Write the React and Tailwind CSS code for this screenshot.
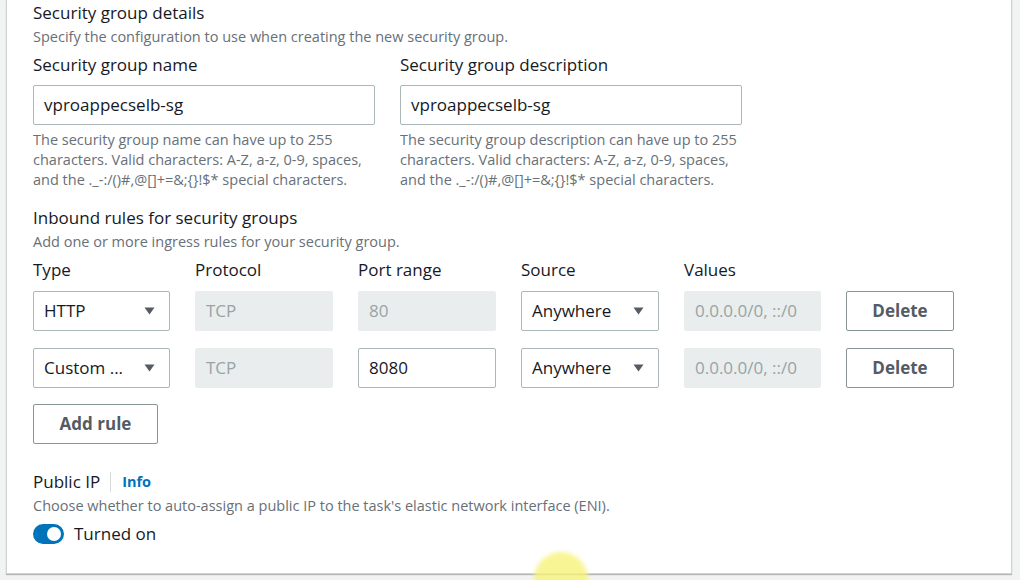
import { useState } from 'react';

const font = { fontFamily: '"Open Sans", "Noto Sans", sans-serif' };

const nameHelp =
  'The security group name can have up to 255 characters. Valid characters: A-Z, a-z, 0-9, spaces, and the ._-:/()#,@[]+=&;{}!$* special characters.';
const descHelp =
  'The security group description can have up to 255 characters. Valid characters: A-Z, a-z, 0-9, spaces, and the ._-:/()#,@[]+=&;{}!$* special characters.';

function Caret() {
  return (
    <svg width="11" height="8" viewBox="0 0 11 8" className="shrink-0">
      <path d="M0.5 0.5 H10.5 L5.5 7.5 Z" fill="#545b64" />
    </svg>
  );
}

function Select({ value }) {
  return (
    <div className="h-[40px] border border-[#aab7b8] rounded-[2px] bg-white flex items-center justify-between pl-[10px] pr-[14px] text-[17px] text-[#16191f]">
      <span>{value}</span>
      <Caret />
    </div>
  );
}

function Disabled({ value }) {
  return (
    <div className="h-[40px] rounded-[2px] bg-[#eaeded] flex items-center pl-[11px] text-[17px] text-[#95a5a6]">
      {value}
    </div>
  );
}

function Field({ value }) {
  return (
    <div className="h-[40px] border border-[#aab7b8] rounded-[2px] bg-white flex items-center pl-[10px] text-[17px] text-[#16191f]">
      {value}
    </div>
  );
}

function Button({ children, className = '' }) {
  return (
    <div className={`h-[40px] border border-[#879596] rounded-[2px] bg-white flex items-center justify-center text-[17px] font-bold text-[#545b64] ${className}`}>
      {children}
    </div>
  );
}

const rules = [
  { type: 'HTTP', port: '80', portEditable: false },
  { type: 'Custom ...', port: '8080', portEditable: true },
];

export default function App() {
  const [on] = useState(true);

  return (
    <div className="relative w-[1020px] h-[580px] overflow-hidden bg-[#f2f3f3]" style={font}>
      <div className="ml-[6px] w-[1006px] h-[574px] bg-white border-x border-b border-[#d0d3d3] shadow-[0_1px_1px_rgba(0,0,0,0.25)] pl-[26px] pt-[3px]">
        {/* Security group details */}
        <div className="text-[17px] leading-[20px] text-[#16191f]">Security group details</div>
        <div className="mt-[4px] text-[14.5px] leading-[20px] text-[#687078]">
          Specify the configuration to use when creating the new security group.
        </div>

        <div className="mt-[8px] flex gap-[25px]">
          <div className="w-[342px]">
            <div className="text-[17px] leading-[20px] text-[#16191f]">Security group name</div>
            <div className="mt-[10px]">
              <Field value="vproappecselb-sg" />
            </div>
            <p className="mt-[5px] text-[14.5px] leading-[20px] text-[#687078]">{nameHelp}</p>
          </div>
          <div className="w-[344px]">
            <div className="text-[17px] leading-[20px] text-[#16191f]">Security group description</div>
            <div className="mt-[10px] w-[342px]">
              <Field value="vproappecselb-sg" />
            </div>
            <p className="mt-[5px] text-[14.5px] leading-[20px] text-[#687078]">{descHelp}</p>
          </div>
        </div>

        {/* Inbound rules */}
        <div className="mt-[18px] text-[17px] leading-[20px] text-[#16191f]">Inbound rules for security groups</div>
        <div className="mt-[4px] text-[14.5px] leading-[20px] text-[#687078]">
          Add one or more ingress rules for your security group.
        </div>

        <div className="mt-[8px] grid grid-cols-[137px_138px_138px_138px_137px_108px] gap-x-[25px] text-[17px] leading-[20px] text-[#16191f]">
          <div>Type</div>
          <div>Protocol</div>
          <div>Port range</div>
          <div>Source</div>
          <div>Values</div>
          <div />
        </div>

        {rules.map((r, i) => (
          <div
            key={i}
            className={`grid grid-cols-[137px_138px_138px_138px_137px_108px] gap-x-[25px] ${i === 0 ? 'mt-[11px]' : 'mt-[17px]'}`}
          >
            <Select value={r.type} />
            <Disabled value="TCP" />
            {r.portEditable ? <Field value={r.port} /> : <Disabled value={r.port} />}
            <Select value="Anywhere" />
            <Disabled value="0.0.0.0/0, ::/0" />
            <Button>Delete</Button>
          </div>
        ))}

        <Button className="mt-[16px] w-[125px]">Add rule</Button>

        {/* Public IP */}
        <div className="mt-[28px] flex items-center h-[20px]">
          <span className="text-[17px] leading-[20px] text-[#16191f]">Public IP</span>
          <span className="ml-[10px] h-[20px] w-px bg-[#d5dbdb]" />
          <span className="ml-[11px] text-[14.5px] font-bold text-[#0073bb]">Info</span>
        </div>
        <div className="mt-[4px] text-[14.5px] leading-[20px] text-[#687078]">
          Choose whether to auto-assign a public IP to the task's elastic network interface (ENI).
        </div>
        <div className="mt-[8px] flex items-center h-[20px] gap-[10px]">
          <div className={`w-[31px] h-[20px] rounded-full flex items-center px-[3px] ${on ? 'bg-[#0073bb] justify-end' : 'bg-[#879596] justify-start'}`}>
            <div className="w-[14px] h-[14px] rounded-full bg-white" />
          </div>
          <span className="text-[17px] leading-[20px] text-[#16191f]">Turned on</span>
        </div>
      </div>

      {/* cursor highlight */}
      <div className="absolute left-[534px] top-[552px] w-[54px] h-[54px] rounded-full bg-[#f7f37a] opacity-80 blur-[2px]" />
    </div>
  );
}
